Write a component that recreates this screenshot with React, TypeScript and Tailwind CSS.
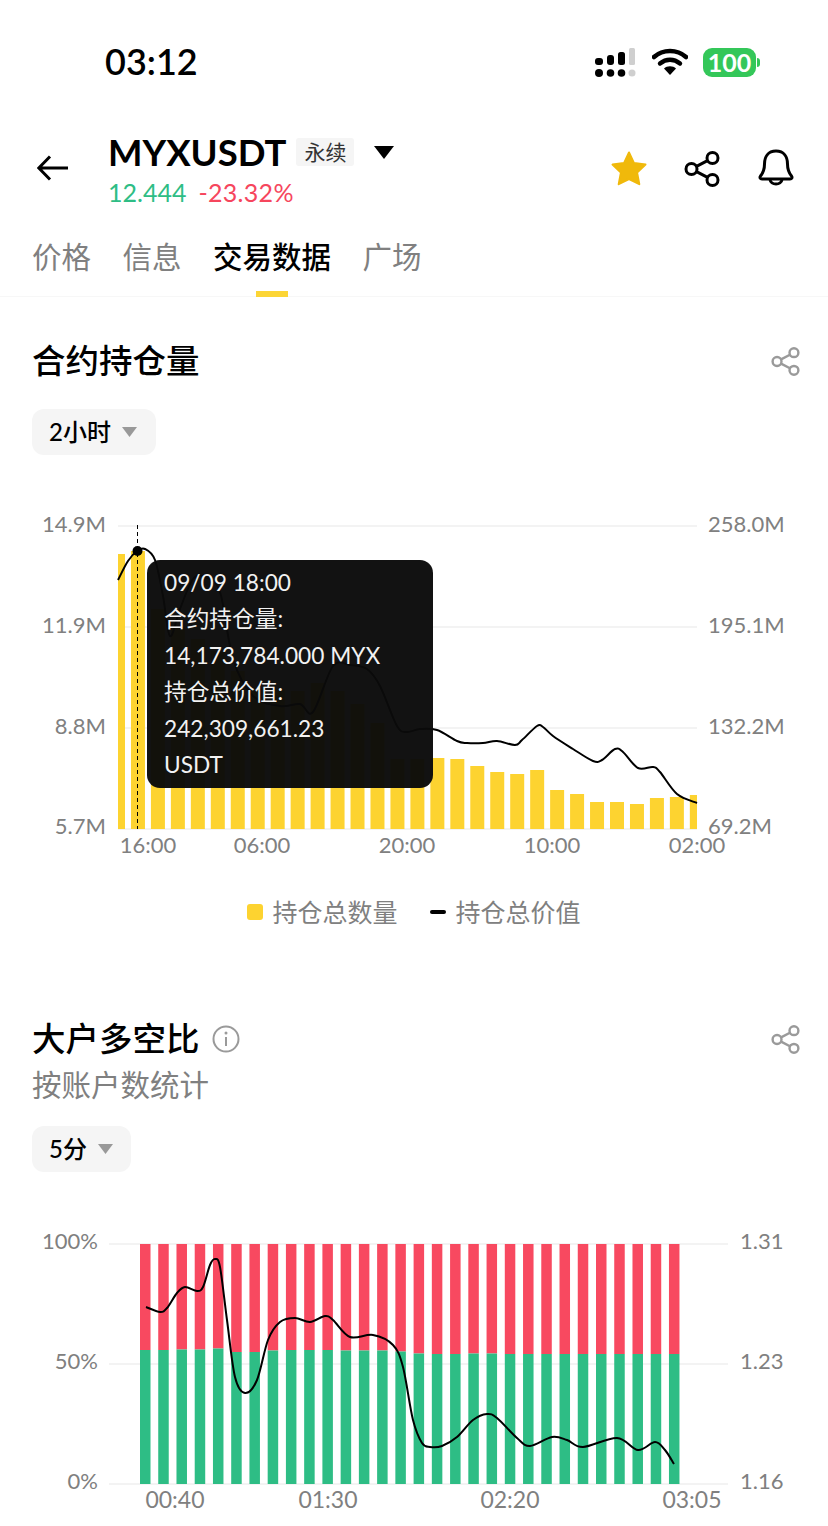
import { useMemo } from 'react';

type Pt = [number, number];

// catmull-rom through the sampled points, good enough for these curves
function smoothPath(pts: Pt[]) {
  let d = `M${pts[0][0]} ${pts[0][1]}`;
  for (let i = 0; i < pts.length - 1; i++) {
    const p0 = pts[i - 1] ?? pts[i];
    const p1 = pts[i];
    const p2 = pts[i + 1];
    const p3 = pts[i + 2] ?? p2;
    const c1x = p1[0] + (p2[0] - p0[0]) / 6;
    const c1y = p1[1] + (p2[1] - p0[1]) / 6;
    const c2x = p2[0] - (p3[0] - p1[0]) / 6;
    const c2y = p2[1] - (p3[1] - p1[1]) / 6;
    d += `C${c1x.toFixed(1)} ${c1y.toFixed(1)} ${c2x.toFixed(1)} ${c2y.toFixed(1)} ${p2[0]} ${p2[1]}`;
  }
  return d;
}

const oiBarTops = [
  555, 552, 610, 628, 640, 652, 672, 690, 690, 692, 684, 692, 705, 724, 760, 760, 759, 760, 767, 773, 775, 771, 791, 795,
  803, 803, 805, 799, 798, 796,
];

const oiLine: Pt[] = [
  [118, 581], [128, 562], [137, 552], [145, 550], [155, 561], [163, 597], [170, 637], [180, 610], [193, 580], [205, 578],
  [220, 593], [233, 660], [253, 697], [280, 707], [300, 705], [313, 713], [333, 667], [350, 666], [367, 670], [380, 687],
  [397, 727], [407, 733], [420, 730], [437, 731], [457, 742], [467, 744], [483, 744], [497, 742], [515, 746], [522, 741],
  [537, 727], [543, 728], [553, 737], [573, 750], [593, 762], [602, 761], [615, 750], [623, 753], [638, 769], [653, 768],
  [660, 773], [677, 795], [697, 804],
];

const lsSplit = [
  1350, 1350, 1349.5, 1349.5, 1348.5, 1352, 1352, 1350.5, 1350, 1350, 1350, 1350.5, 1350.5, 1350.5, 1351.5, 1353.5, 1354,
  1354, 1353.5, 1353.5, 1354, 1354, 1354, 1354, 1354, 1354, 1354, 1354, 1354, 1354,
];

const lsLine: Pt[] = [
  [146, 1307], [160, 1312], [167, 1308], [177, 1293], [185, 1287], [197, 1291], [203, 1287], [210, 1265], [215, 1259],
  [220, 1267], [227, 1320], [235, 1377], [245, 1393], [257, 1380], [268, 1340], [280, 1322], [295, 1318], [310, 1322],
  [325, 1316], [333, 1320], [350, 1337], [373, 1335], [393, 1345], [403, 1367], [413, 1420], [422, 1443], [430, 1447],
  [442, 1446], [457, 1437], [473, 1420], [487, 1414], [497, 1418], [517, 1438], [530, 1446], [552, 1437], [567, 1440],
  [583, 1447], [617, 1438], [638, 1450], [655, 1442], [665, 1450], [674, 1464],
];

function ShareIcon({ className }: { className: string }) {
  return (
    <svg viewBox="0 0 36 36" fill="none" stroke="currentColor" strokeWidth="3" className={className}>
      <circle cx="7.5" cy="18" r="5.5" />
      <circle cx="28.5" cy="7" r="5.5" />
      <circle cx="28.5" cy="29" r="5.5" />
      <path d="M12.5 15.4l11-5.8M12.5 20.6l11 5.8" />
    </svg>
  );
}

function StatusBar() {
  return (
    <div className="h-[124px] flex items-center justify-between pl-[105px] pr-[68px]">
      <span className="text-[36px] font-semibold text-black leading-none -mt-[2px]">03:12</span>
      <div className="flex items-center">
        <svg width="42" height="30" viewBox="0 0 42 30" className="mr-[15px]">
          <rect x="0" y="11" width="8" height="7" rx="3" fill="#000" />
          <rect x="12" y="8" width="7" height="10" rx="3" fill="#000" />
          <rect x="23" y="5" width="7" height="13" rx="2.5" fill="#000" />
          <rect x="34" y="1" width="6" height="17" rx="1.5" fill="#cfcfcf" />
          <circle cx="4" cy="26" r="4" fill="#000" />
          <circle cx="15.5" cy="26" r="3.8" fill="#000" />
          <circle cx="26.5" cy="26" r="3.8" fill="#000" />
          <circle cx="37" cy="26" r="3.5" fill="#cfcfcf" />
        </svg>
        <svg width="36" height="28" viewBox="0 0 36 28" className="mr-[15px]">
          <path d="M2 9C11 1 25 1 34 9" fill="none" stroke="#000" strokeWidth="4.6" strokeLinecap="round" />
          <path d="M8 15.5C14 10.5 22 10.5 28 15.5" fill="none" stroke="#000" strokeWidth="4.4" strokeLinecap="round" />
          <path d="M12 20.5C15 17.6 21 17.6 24 20.5L18 27Z" fill="#000" />
        </svg>
        <div className="h-[29px] w-[53px] rounded-[9px] bg-[#34c759] text-white text-[25px] font-bold leading-[29px] text-center">
          100
        </div>
        <div className="ml-[1px] h-[9px] w-[3px] rounded-r-full bg-[#34c759]" />
      </div>
    </div>
  );
}

function Header() {
  return (
    <div className="h-[88px] flex items-start pl-[37px] pr-[34px]">
      <svg width="32" height="28" viewBox="0 0 32 28" fill="none" stroke="#000" strokeWidth="3" className="mt-[30px]">
        <path d="M31 14H2M13 2.5L1.8 14L13 25.5" />
      </svg>
      <div className="ml-[39px] flex-1">
        <div className="flex items-center h-[56px]">
          <span className="text-[36.500px] font-bold text-black leading-none">MYXUSDT</span>
          <span className="ml-[10px] h-[28px] w-[58px] bg-[#f5f5f5] rounded-[3px] text-[21px] leading-[28px] text-center text-[#333]">
            永续
          </span>
          <svg width="20" height="13" viewBox="0 0 20 13" className="ml-[20px]">
            <path d="M0 0H20L10 13Z" fill="#000" />
          </svg>
        </div>
        <div className="flex items-center text-[25px] leading-[26px] -mt-[1px]">
          <span className="text-[#2ebd85]">12.444</span>
          <span className="ml-[12px] text-[#f6465d] tracking-[0.3px]">-23.32%</span>
        </div>
      </div>
      <svg width="38" height="38" viewBox="0 0 38 38" className="mt-[26px]">
        <path
          d="M19 2.5l5 10.6 11.5 1.5-8.4 8 2.2 11.6L19 29l-10.3 5.2 2.2-11.6-8.4-8L14 13.1z"
          fill="#f0b90b"
          stroke="#f0b90b"
          strokeWidth="2"
          strokeLinejoin="round"
        />
      </svg>
      <ShareIcon className="ml-[36px] mt-[27px] w-[36px] h-[36px] text-black" />
      <svg width="36" height="38" viewBox="0 0 36 38" fill="none" stroke="#000" strokeWidth="3" className="ml-[38px] mt-[25px]">
        <path d="M18 2C10 2 6.5 8 6.5 15c0 6-1.5 9-4 12-1 1.5-.4 3 1.5 3h28c1.900 0 2.500-1.500 1.500-3-2.500-3-4-6-4-12C29.500 8 26 2 18 2Z" strokeLinejoin="round" />
        <path d="M12 30.500c.5 6 11.500 6 12 0" />
      </svg>
    </div>
  );
}

function Tabs() {
  return (
    <div className="h-[65px] mt-[20px] px-[32px] flex gap-[31.500px] border-b border-[#f7f7f7] text-[29.500px] leading-[50px] text-[#808080]">
      <span>价格</span>
      <span>信息</span>
      <span className="relative font-medium text-black">
        交易数据
        <span className="absolute left-[43px] top-[59px] w-[32px] h-[6px] bg-[#fcd535]" />
      </span>
      <span>广场</span>
    </div>
  );
}

function SectionTitle({ title, info }: { title: string; info?: boolean }) {
  return (
    <div className="flex items-center h-[46px] px-[28px] pl-[32px]">
      <h2 className="text-[33.500px] font-medium text-black leading-none">{title}</h2>
      {info && (
        <svg width="28" height="28" viewBox="0 0 28 28" fill="none" className="ml-[12px]">
          <circle cx="14" cy="14" r="12.500" stroke="#9a9a9a" strokeWidth="2" />
          <path d="M14 12v9" stroke="#9a9a9a" strokeWidth="2" />
          <circle cx="14" cy="8" r="1.500" fill="#9a9a9a" />
        </svg>
      )}
      <ShareIcon className="ml-auto w-[29px] h-[29px] text-[#9a9a9a]" />
    </div>
  );
}

function IntervalButton({ label, width }: { label: string; width: string }) {
  return (
    <div className={`ml-[32px] h-[46px] ${width} rounded-[12px] bg-[#f5f5f5] flex items-center pl-[17px]`}>
      <span className="text-[24px] font-medium text-black leading-none">{label}</span>
      <svg width="15" height="10" viewBox="0 0 15 10" className="ml-[11px]">
        <path d="M0 0H15L7.500 10Z" fill="#999" />
      </svg>
    </div>
  );
}

function OpenInterestChart() {
  const linePath = useMemo(() => smoothPath(oiLine), []);
  return (
    <div className="relative h-[370px] mt-[44px]">
      <svg width="828" height="370" viewBox="0 500 828 370" className="block">
        <g stroke="#f3f3f3" strokeWidth="2">
          <path d="M118 527H697M118 628H697M118 729H697M118 830H697" />
        </g>
        {oiBarTops.map((top, i) => {
          const x = 111 + i * 19.96;
          const left = Math.max(x, 118);
          const right = Math.min(x + 14, 697);
          return <rect key={i} x={left} y={top} width={right - left} height={830 - top} fill="#fdd330" />;
        })}
        <path d="M137.500 526V830" stroke="#000" strokeWidth="1" strokeDasharray="4 3" />
        <path d={linePath} fill="none" stroke="#000" strokeWidth="2" />
        <circle cx="137.500" cy="552" r="5" fill="#000" />
        <g fill="#808080" fontSize="22">
          <text x="106" y="533" textAnchor="end">14.9M</text>
          <text x="106" y="634" textAnchor="end">11.9M</text>
          <text x="106" y="735" textAnchor="end">8.8M</text>
          <text x="106" y="835" textAnchor="end">5.7M</text>
          <text x="708" y="533">258.0M</text>
          <text x="708" y="634">195.1M</text>
          <text x="708" y="735">132.2M</text>
          <text x="708" y="835">69.2M</text>
          <text x="148" y="854" textAnchor="middle">16:00</text>
          <text x="262" y="854" textAnchor="middle">06:00</text>
          <text x="407" y="854" textAnchor="middle">20:00</text>
          <text x="552" y="854" textAnchor="middle">10:00</text>
          <text x="697" y="854" textAnchor="middle">02:00</text>
        </g>
      </svg>
      <div className="absolute left-[147px] top-[61px] w-[286px] h-[228px] rounded-[13px] bg-[#0a0a0a]/[0.97] pl-[17px] pt-[5px] text-[22.700px] leading-[36.400px] text-[#f2f2f2]">
        <div>09/09 18:00</div>
        <div>合约持仓量:</div>
        <div>14,173,784.000 MYX</div>
        <div>持仓总价值:</div>
        <div>242,309,661.23</div>
        <div>USDT</div>
      </div>
    </div>
  );
}

function Legend() {
  return (
    <div className="h-[30px] mt-[28px] flex items-center justify-center text-[25px] leading-[30px] text-[#808080]">
      <span className="w-[16px] h-[16px] rounded-[3px] bg-[#fdd330]" />
      <span className="ml-[9px]">持仓总数量</span>
      <span className="ml-[32px] w-[16px] h-[4px] rounded-full bg-black" />
      <span className="ml-[10px]">持仓总价值</span>
    </div>
  );
}

function LongShortChart() {
  const linePath = useMemo(() => smoothPath(lsLine), []);
  return (
    <div className="h-[306px] mt-[48px]">
      <svg width="828" height="306" viewBox="0 1220 828 306" className="block">
        <path d="M109 1244H728M109 1364H728M109 1484H728" stroke="#f3f3f3" strokeWidth="2" />
        {lsSplit.map((split, i) => {
          const x = 140 + i * 18.24;
          return (
            <g key={i}>
              <rect x={x} y={1244} width={10.500} height={split - 1244} fill="#f84960" />
              <rect x={x} y={split} width={10.500} height={1484 - split} fill="#2ebd85" />
            </g>
          );
        })}
        <path d={linePath} fill="none" stroke="#000" strokeWidth="2" />
        <g fill="#808080" fontSize="22">
          <text x="98" y="1249" textAnchor="end">100%</text>
          <text x="98" y="1369" textAnchor="end">50%</text>
          <text x="98" y="1489" textAnchor="end">0%</text>
          <text x="740" y="1249">1.31</text>
          <text x="740" y="1369">1.23</text>
          <text x="740" y="1489">1.16</text>
        </g>
        <g fill="#808080" fontSize="23">
          <text x="175" y="1508" textAnchor="middle">00:40</text>
          <text x="328" y="1508" textAnchor="middle">01:30</text>
          <text x="510" y="1508" textAnchor="middle">02:20</text>
          <text x="692" y="1508" textAnchor="middle">03:05</text>
        </g>
      </svg>
    </div>
  );
}

export default function App() {
  return (
    <div className="w-[828px] h-[1526px] overflow-hidden bg-white [font-family:Lato,'Noto_Sans_CJK_SC',sans-serif]">
      <StatusBar />
      <Header />
      <Tabs />
      <div className="pt-[41px]">
        <SectionTitle title="合约持仓量" />
        <div className="mt-[25px]">
          <IntervalButton label="2小时" width="w-[124px]" />
        </div>
        <OpenInterestChart />
        <Legend />
      </div>
      <div className="mt-[89px]">
        <SectionTitle title="大户多空比" info />
        <div className="h-[40px] mt-[3px] pl-[32px] text-[29.500px] leading-[40px] text-[#808080]">按账户数统计</div>
        <div className="mt-[21px]">
          <IntervalButton label="5分" width="w-[99px]" />
        </div>
        <LongShortChart />
      </div>
    </div>
  );
}
